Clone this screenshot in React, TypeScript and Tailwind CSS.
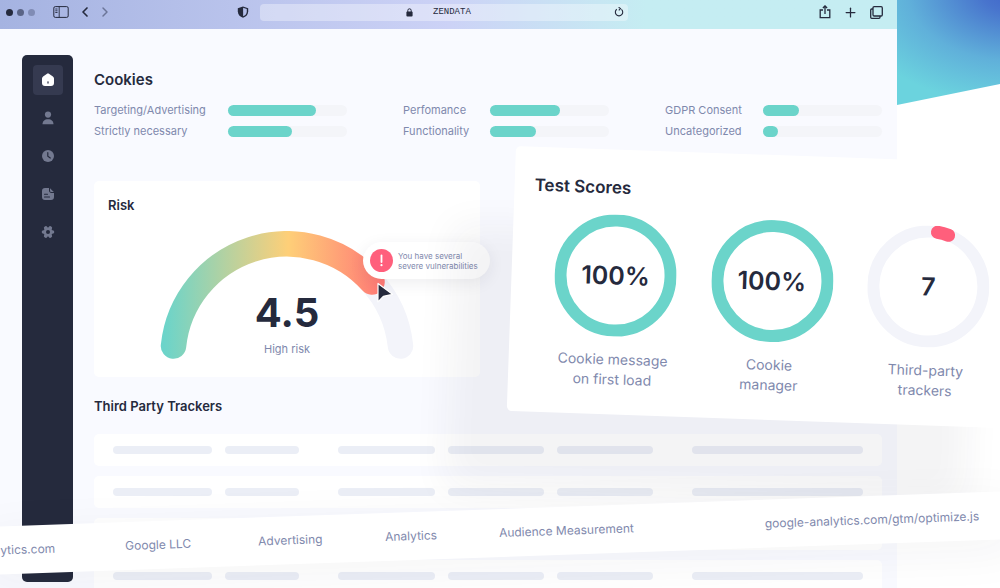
import { ChevronLeft, ChevronRight, Plus } from "lucide-react";
import { ReactNode, useState } from "react";

const cookieGroups = [
  {
    cols: "grid-cols-[134px_119px]",
    items: [
      { label: "Targeting/Advertising", value: 74 },
      { label: "Strictly necessary", value: 54 },
    ],
  },
  {
    cols: "grid-cols-[87px_119px]",
    items: [
      { label: "Perfomance", value: 59 },
      { label: "Functionality", value: 39 },
    ],
  },
  {
    cols: "grid-cols-[98px_119px]",
    items: [
      { label: "GDPR Consent", value: 30 },
      { label: "Uncategorized", value: 13 },
    ],
  },
];

const scores = [
  { value: "100%", lines: ["Cookie message", "on first load"], full: true },
  { value: "100%", lines: ["Cookie", "manager"], full: true },
  { value: "7", lines: ["Third-party", "trackers"], full: false },
];

const navItems: { name: string; icon: ReactNode }[] = [
  {
    name: "Home",
    icon: (
      <>
        <path d="M7 .5c.5 0 .9.1 1.300.4l3.600 2.500c.7.5 1.100 1.200 1.100 2v4.600c0 1.900-1.100 3-3 3H4c-1.900 0-3-1.100-3-3V5.400c0-.8.4-1.500 1.100-2L5.700.9C6.100.6 6.500.5 7 .5z" fill="currentColor" />
        <path d="M7 8.800v1.300" stroke="#353a50" strokeWidth="1.300" strokeLinecap="round" />
      </>
    ),
  },
  {
    name: "Profile",
    icon: (
      <>
        <circle cx="7" cy="3.600" r="3.100" fill="currentColor" />
        <path d="M1.500 13.200c0-3 2-5 5.500-5s5.500 2 5.500 5z" fill="currentColor" />
      </>
    ),
  },
  {
    name: "History",
    icon: (
      <>
        <circle cx="7" cy="7" r="6" fill="currentColor" />
        <path d="M6.800 3.700v3.600l2.500 1.700" stroke="#252a3d" strokeWidth="1.200" fill="none" strokeLinecap="round" />
      </>
    ),
  },
  {
    name: "Reports",
    icon: (
      <>
        <path d="M4 1h4v2.500C8 5 9 6 10.500 6H13v4c0 1.900-1.100 3-3 3H4c-1.900 0-3-1.100-3-3V4c0-1.900 1.100-3 3-3z" fill="currentColor" />
        <path d="M9 1.200L12.800 5h-2.300C9.500 5 9 4.500 9 3.500z" fill="currentColor" />
        <path d="M3.500 7.300h3M3.500 10h5" stroke="#252a3d" strokeWidth="1.100" strokeLinecap="round" />
      </>
    ),
  },
  {
    name: "Settings",
    icon: (
      <>
        <g stroke="currentColor" strokeWidth="3.600" strokeLinecap="round">
          <path d="M4.700 3l4.600 8M9.300 3l-4.600 8M2.500 7h9" />
        </g>
        <circle cx="7" cy="7" r="4.400" fill="currentColor" />
        <circle cx="7" cy="7" r="2" fill="#252a3d" />
      </>
    ),
  },
];

const trackerCells = [
  "mr-[13px]",
  "mr-[39px]",
  "mr-[13px]",
  "mr-[13px]",
  "mr-[39px]",
  "mr-0",
];

const BrowserBar = () => {
  const [address, setAddress] = useState("ZENDATA");

  return (
    <header className="flex h-[29px] shrink-0 items-center bg-linear-to-r from-[#a5b3e1] via-[#ccd2f6] via-50% to-[#c5edf2] to-72% pr-[14px] pb-[5px] pl-[6px] text-[#252a3d]">
      <div className="flex w-[231px] shrink-0 items-center">
        <div className="flex gap-1">
          <span className="size-[7px] rounded-full bg-[#252a3d]" />
          <span className="size-[7px] rounded-full bg-[#5a6486]" />
          <span className="size-[7px] rounded-full bg-[#808cb5]" />
        </div>
        <button aria-label="Toggle sidebar" className="ml-[18px]">
          <svg viewBox="0 0 16 12" className="h-3 w-4" fill="none" stroke="currentColor">
            <rect x=".8" y=".6" width="14.400" height="10.800" rx="1.500" />
            <path d="M6.200.6v10.800M2.300 3h2.200M2.300 4.800h2.200M2.300 6.500h2.200" strokeWidth=".9" />
          </svg>
        </button>
        <button aria-label="Back" className="ml-2">
          <ChevronLeft size={16} strokeWidth={2.500} />
        </button>
        <button aria-label="Forward" className="ml-1 text-[#6b7598]">
          <ChevronRight size={16} strokeWidth={2.200} />
        </button>
      </div>
      <button aria-label="Privacy" className="mr-[11px]">
        <svg viewBox="0 0 12 12" className="size-3">
          <path d="M6 .4l5.200 1.800v3C11.200 8.600 9 10.700 6 11.800 3 10.700.8 8.600.8 5.200v-3z" fill="currentColor" />
          <path d="M6.100 1.800l3.700 1.300v2.300c0 2.300-1.400 3.900-3.700 4.900z" fill="#b3bee9" />
        </svg>
      </button>
      <div className="flex h-[17px] w-[42%] items-center rounded bg-white/35 pr-1 pl-[146px]">
        <svg viewBox="0 0 7 9" className="h-[9px] w-[7px] shrink-0">
          <rect x=".4" y="3.500" width="6.200" height="5" rx="1" fill="currentColor" />
          <path d="M1.800 4V2.500a1.700 1.700 0 013.400 0V4" stroke="currentColor" fill="none" />
        </svg>
        <input
          aria-label="Address"
          value={address}
          onChange={(e) => setAddress(e.target.value)}
          className="ml-5 h-3 w-0 flex-1 bg-transparent font-['Liberation_Mono',monospace] text-[9px] leading-3 outline-none"
        />
        <button aria-label="Reload">
          <svg viewBox="0 0 10 10" className="size-[10px]" fill="none" stroke="currentColor" strokeWidth="1.100">
            <path d="M7.400 2.300a3.700 3.700 0 11-4.600-.1" />
            <path d="M4.600.3l1.900 1.300-1.700 1.700" />
          </svg>
        </button>
      </div>
      <div className="ml-auto flex items-center gap-3">
        <button aria-label="Share">
          <svg viewBox="0 0 12 14" className="h-[14px] w-3" fill="none" stroke="currentColor" strokeWidth="1.300">
            <path d="M4 5H1.200v7.700h9.600V5H8M6 9V1M3.900 3L6 .9 8.100 3" />
          </svg>
        </button>
        <button aria-label="New tab">
          <Plus size={15} strokeWidth={2} />
        </button>
        <button aria-label="Tabs">
          <svg viewBox="0 0 13 13" className="size-[13px]" fill="none" stroke="currentColor" strokeWidth="1.300">
            <rect x="3" y=".7" width="9.300" height="9.300" rx="1.200" />
            <path d="M3 3H1.700c-.6 0-1 .4-1 1v7.300c0 .6.400 1 1 1H9c.6 0 1-.4 1-1V10" />
          </svg>
        </button>
      </div>
    </header>
  );
};

const Sidebar = () => {
  const [active, setActive] = useState("Home");

  return (
    <nav className="flex w-[51px] shrink-0 flex-col items-center gap-2 rounded-[5px] bg-[#252a3d] pt-[10px]">
      {navItems.map((item) => (
        <button
          key={item.name}
          aria-label={item.name}
          onClick={() => setActive(item.name)}
          className={
            active === item.name
              ? "flex size-[30px] items-center justify-center rounded bg-[#353a50] text-white"
              : "flex size-[30px] items-center justify-center rounded text-[#737990]"
          }
        >
          <svg viewBox="0 0 14 14" className="size-[14px]" fill="none">
            {item.icon}
          </svg>
        </button>
      ))}
    </nav>
  );
};

const RiskCard = () => (
  <section className="relative mt-[42px] w-[49%] rounded-[5px] bg-white pt-[14px] pb-[18px]">
    <h2 className="ml-[14px] text-[13px] leading-5 font-semibold">Risk</h2>
    <div className="relative mt-4 flex flex-col items-center">
      <svg viewBox="0 0 254 128" className="h-32 w-[254px]" fill="none" strokeWidth="25.500" strokeLinecap="round">
        <defs>
          <linearGradient id="risk" gradientUnits="userSpaceOnUse" x1="4" y1="0" x2="222" y2="0">
            <stop offset="0" stopColor="#6bd4ca" />
            <stop offset=".57" stopColor="#fecf78" />
            <stop offset="1" stopColor="#ff7a76" />
          </linearGradient>
        </defs>
        <path d="M211 50A114 114 0 01240.500 115" stroke="#f3f4fa" />
        <path d="M13.500 115A114 114 0 01212 51" stroke="url(#risk)" />
      </svg>
      <div className="absolute top-[62px] flex flex-col items-center">
        <strong className="text-[40px] leading-10 font-bold">4.5</strong>
        <span className="mt-[10px] text-[11px] leading-3 text-[#7f89ad]">High risk</span>
      </div>
    </div>
    <div role="status" className="absolute top-[61px] left-[269px] flex h-[37px] items-center gap-[5px] rounded-full bg-white pr-3 pl-[7px] whitespace-nowrap shadow-[0_4px_16px_rgba(37,42,61,0.08)]">
      <svg viewBox="0 0 23 23" className="size-[23px]">
        <circle cx="11.500" cy="11.500" r="11.500" fill="#ff5f7c" />
        <path d="M11.500 6.500v6.500" stroke="#fff" strokeWidth="1.800" strokeLinecap="round" />
        <circle cx="11.500" cy="16.200" r="1.100" fill="#fff" />
      </svg>
      <p className="text-[8px] leading-[10px] text-[#7f89ad]">
        You have several
        <br />
        severe vulnerabilities
      </p>
    </div>
    <svg viewBox="0 0 18 22" className="absolute top-[101px] left-[282px] h-[22px] w-[18px]">
      <path d="M2 1.500v18.300l5.300-5.500 9.200-2z" fill="#252a3d" stroke="#fff" strokeWidth="1.200" strokeLinejoin="round" />
    </svg>
  </section>
);

const TestScores = () => (
  <section className="absolute top-[146px] left-[516px] h-[265px] w-[521px] origin-top-left rotate-2 rounded-[5px] bg-white shadow-[-60px_80px_36px_rgba(30,30,50,0.05)]">
    <h2 className="mt-[26px] ml-5 text-[17px] leading-6 font-semibold">Test Scores</h2>
    <div className="mt-[15px] flex justify-between px-[26px]">
      {scores.map((score) => (
        <div key={score.lines[0]} className="flex w-[156px] flex-col items-center">
          <div className="relative flex size-[122px] items-center justify-center">
            <svg viewBox="0 0 122 122" className="absolute inset-0" fill="none" strokeWidth="12">
              <circle cx="61" cy="61" r="55" stroke={score.full ? "#6bd4ca" : "#f3f4fa"} />
              {!score.full && (
                <path d="M68.200 6.500A55 55 0 0179.500 9.200" stroke="#ff5f7c" strokeWidth="13" strokeLinecap="round" />
              )}
            </svg>
            <strong className="relative text-[25px] leading-8 font-semibold">{score.value}</strong>
          </div>
          <p className="mt-[13px] text-center text-sm leading-5 text-[#7f89ad]">
            {score.lines[0]}
            <br />
            {score.lines[1]}
          </p>
        </div>
      ))}
    </div>
  </section>
);

const App = () => {
  return (
    <div className="relative h-screen overflow-hidden bg-white font-['Inter',sans-serif] text-[#252a3d]">
      <div className="absolute top-0 right-0 h-[105px] w-[103px] bg-[radial-gradient(170%_110%_at_115%_-10%,#3f62c8_0%,#4874cd_20%,#60b0da_62%,#6bd3de_100%)] [clip-path:polygon(0_0,100%_0,100%_80%,0_100%)]" />
      <div className="mr-[103px] flex h-full flex-col bg-[#f9faff]">
        <BrowserBar />
        <div className="flex min-h-0 flex-1 gap-[21px] pt-[26px] pr-[15px] pb-[6px] pl-[22px]">
          <Sidebar />
          <main className="min-w-0 flex-1 pt-[15px]">
            <h1 className="text-[15px] leading-5 font-semibold">Cookies</h1>
            <div className="mt-3 flex justify-between">
              {cookieGroups.map((group) => (
                <dl key={group.cols} className={`grid gap-y-[5px] ${group.cols}`}>
                  {group.items.map((item) => (
                    <div key={item.label} className="col-span-2 grid grid-cols-subgrid items-center">
                      <dt className="text-[11px] leading-4 whitespace-nowrap text-[#7f89ad]">{item.label}</dt>
                      <dd className="h-[11px] rounded-full bg-[#f4f5f9]">
                        <div className="h-full rounded-full bg-[#6bd4ca]" style={{ width: `${item.value}%` }} />
                      </dd>
                    </div>
                  ))}
                </dl>
              ))}
            </div>
            <RiskCard />
            <h2 className="mt-[19px] text-[13px] leading-5 font-semibold">Third Party Trackers</h2>
            <div className="mt-[18px] flex flex-col gap-[10px]">
              {[0, 1, 2, 3].map((row) => (
                <div key={row} className="grid h-8 shrink-0 grid-cols-[112fr_113fr_110fr_109fr_135fr_171fr] items-center rounded-[5px] bg-white px-[19px]">
                  {trackerCells.map((cell, i) => (
                    <span key={i} className={`h-2 rounded-full bg-[#ebeef6] ${cell}`} />
                  ))}
                </div>
              ))}
            </div>
          </main>
        </div>
      </div>
      <TestScores />
      <div className="absolute -inset-x-5 top-[509px] grid h-[48px] -rotate-2 grid-cols-[125px_133px_127px_114px_266px_1fr] items-center bg-white pl-5 text-xs whitespace-nowrap text-[#7f89ad] shadow-[0_10px_50px_rgba(37,42,61,0.05)]">
        <span>ytics.com</span>
        <span>Google LLC</span>
        <span>Advertising</span>
        <span>Analytics</span>
        <span>Audience Measurement</span>
        <span>google-analytics.com/gtm/optimize.js</span>
      </div>
    </div>
  );
};

export default App;
